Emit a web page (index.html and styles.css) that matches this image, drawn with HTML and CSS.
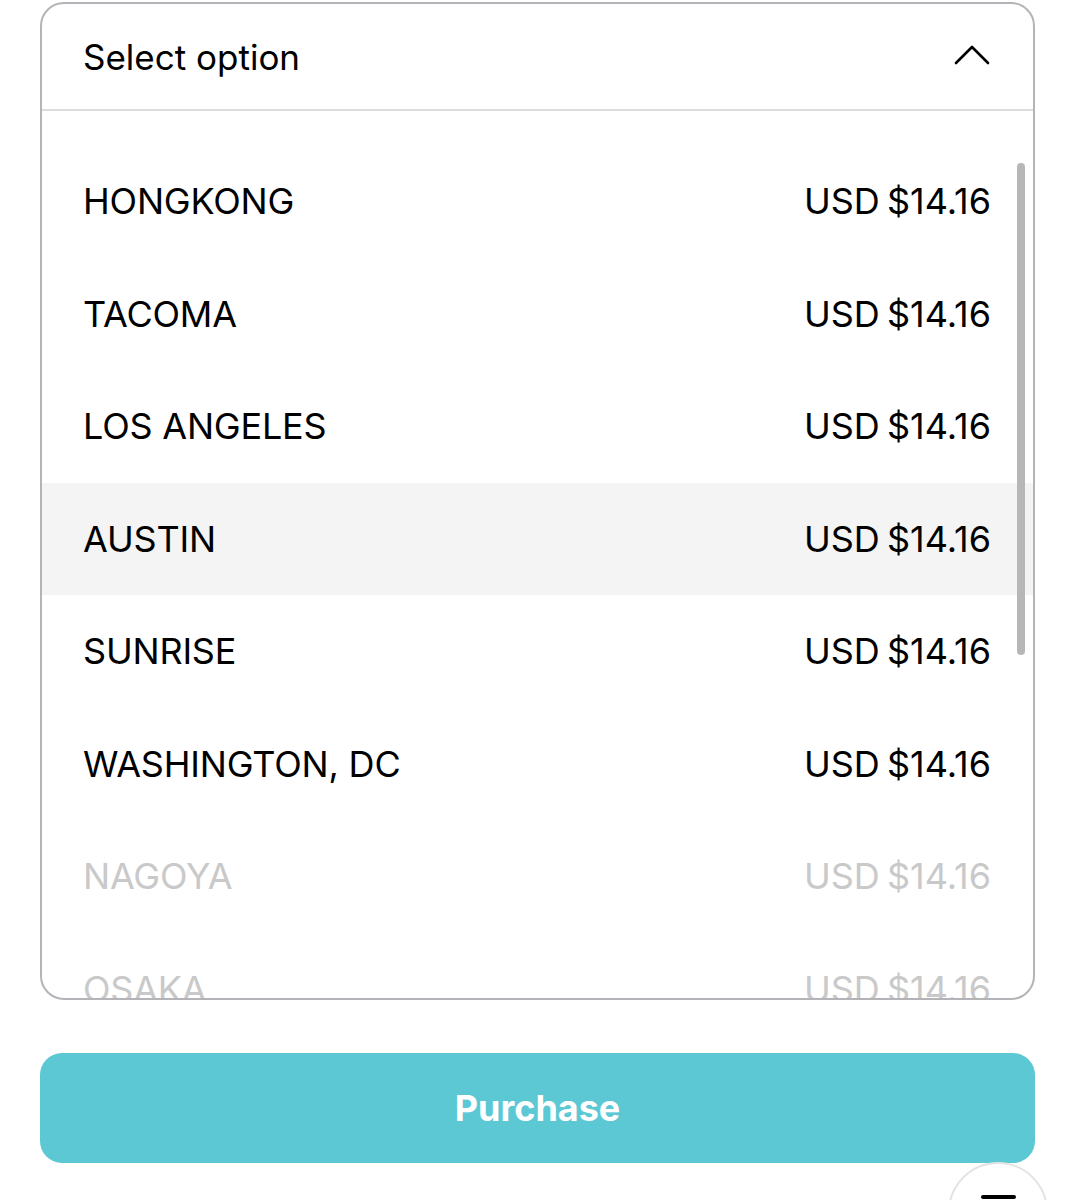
FILE: index.html
```html
<!DOCTYPE html>
<html lang="en">
<head>
  <meta charset="UTF-8">
  <meta name="viewport" content="width=device-width, initial-scale=1.0">
  <title>Select option</title>
  <link rel="stylesheet" href="styles.css">
</head>
<body>
  <div class="page">
    <div class="select">
      <div class="select-head">
        <span>Select option</span>
        <svg class="chevron" width="36" height="20" viewBox="0 0 36 20">
          <polyline points="2,18 18,2 34,18" fill="none" stroke="#000" stroke-width="2.6" stroke-linecap="round" stroke-linejoin="round"/>
        </svg>
      </div>
      <div class="option-list">
        <div class="option"><span>HONGKONG</span><span class="price">USD $14.16</span></div>
        <div class="option"><span>TACOMA</span><span class="price">USD $14.16</span></div>
        <div class="option"><span>LOS ANGELES</span><span class="price">USD $14.16</span></div>
        <div class="option active"><span>AUSTIN</span><span class="price">USD $14.16</span></div>
        <div class="option"><span>SUNRISE</span><span class="price">USD $14.16</span></div>
        <div class="option"><span>WASHINGTON, DC</span><span class="price">USD $14.16</span></div>
        <div class="option faded"><span>NAGOYA</span><span class="price">USD $14.16</span></div>
        <div class="option faded"><span>OSAKA</span><span class="price">USD $14.16</span></div>
      </div>
      <div class="scroll-thumb"></div>
    </div>
    <button class="purchase">Purchase</button>
    <div class="fab"><span></span></div>
  </div>
</body>
</html>
```

FILE: styles.css
```css
* {
  box-sizing: border-box;
  font-family: Inter, 'Liberation Sans', sans-serif;
}
body {
  margin: 0;
  background: #fff;
  color: #000;
  overflow: hidden;
}
.page {
  position: relative;
  height: 1200px;
  padding: 2px 40px 0 40px;
  overflow: hidden;
}
.select {
  position: relative;
  height: 998px;
  border: 2px solid #b4b4b8;
  border-radius: 24px;
  overflow: hidden;
}
.select-head {
  display: flex;
  justify-content: space-between;
  align-items: center;
  height: 107px;
  padding: 0 43px 0 41px;
  border-bottom: 2px solid #dcdcdf;
  font-size: 35px;
}
.chevron {
  margin-top: -4px;
}
.option-list {
  padding-top: 34px;
}
.option {
  display: flex;
  justify-content: space-between;
  align-items: center;
  height: 112.5px;
  padding: 0 42px 0 41px;
  font-size: 36px;
  letter-spacing: -0.2px;
}
.option .price {
  letter-spacing: 0;
  word-spacing: -3px;
}
.option.active {
  background: #f4f4f4;
}
.option.faded {
  color: #c9c9c9;
}
.scroll-thumb {
  position: absolute;
  top: 159px;
  right: 8px;
  width: 8px;
  height: 492px;
  border-radius: 4px;
  background: #b7b7b7;
}
.purchase {
  display: block;
  width: 100%;
  height: 110px;
  margin-top: 53px;
  border: none;
  border-radius: 22px;
  background: #5cc8d4;
  color: #fff;
  font-size: 36px;
  font-weight: 700;
}
.fab {
  position: absolute;
  left: 948px;
  top: 1162px;
  width: 100px;
  height: 100px;
  border: 2px solid #e3e3e3;
  border-radius: 50%;
  background: #fff;
}
.fab span {
  position: absolute;
  left: 31px;
  top: 31px;
  width: 35px;
  height: 4px;
  border-radius: 2px;
  background: #000;
}
```
